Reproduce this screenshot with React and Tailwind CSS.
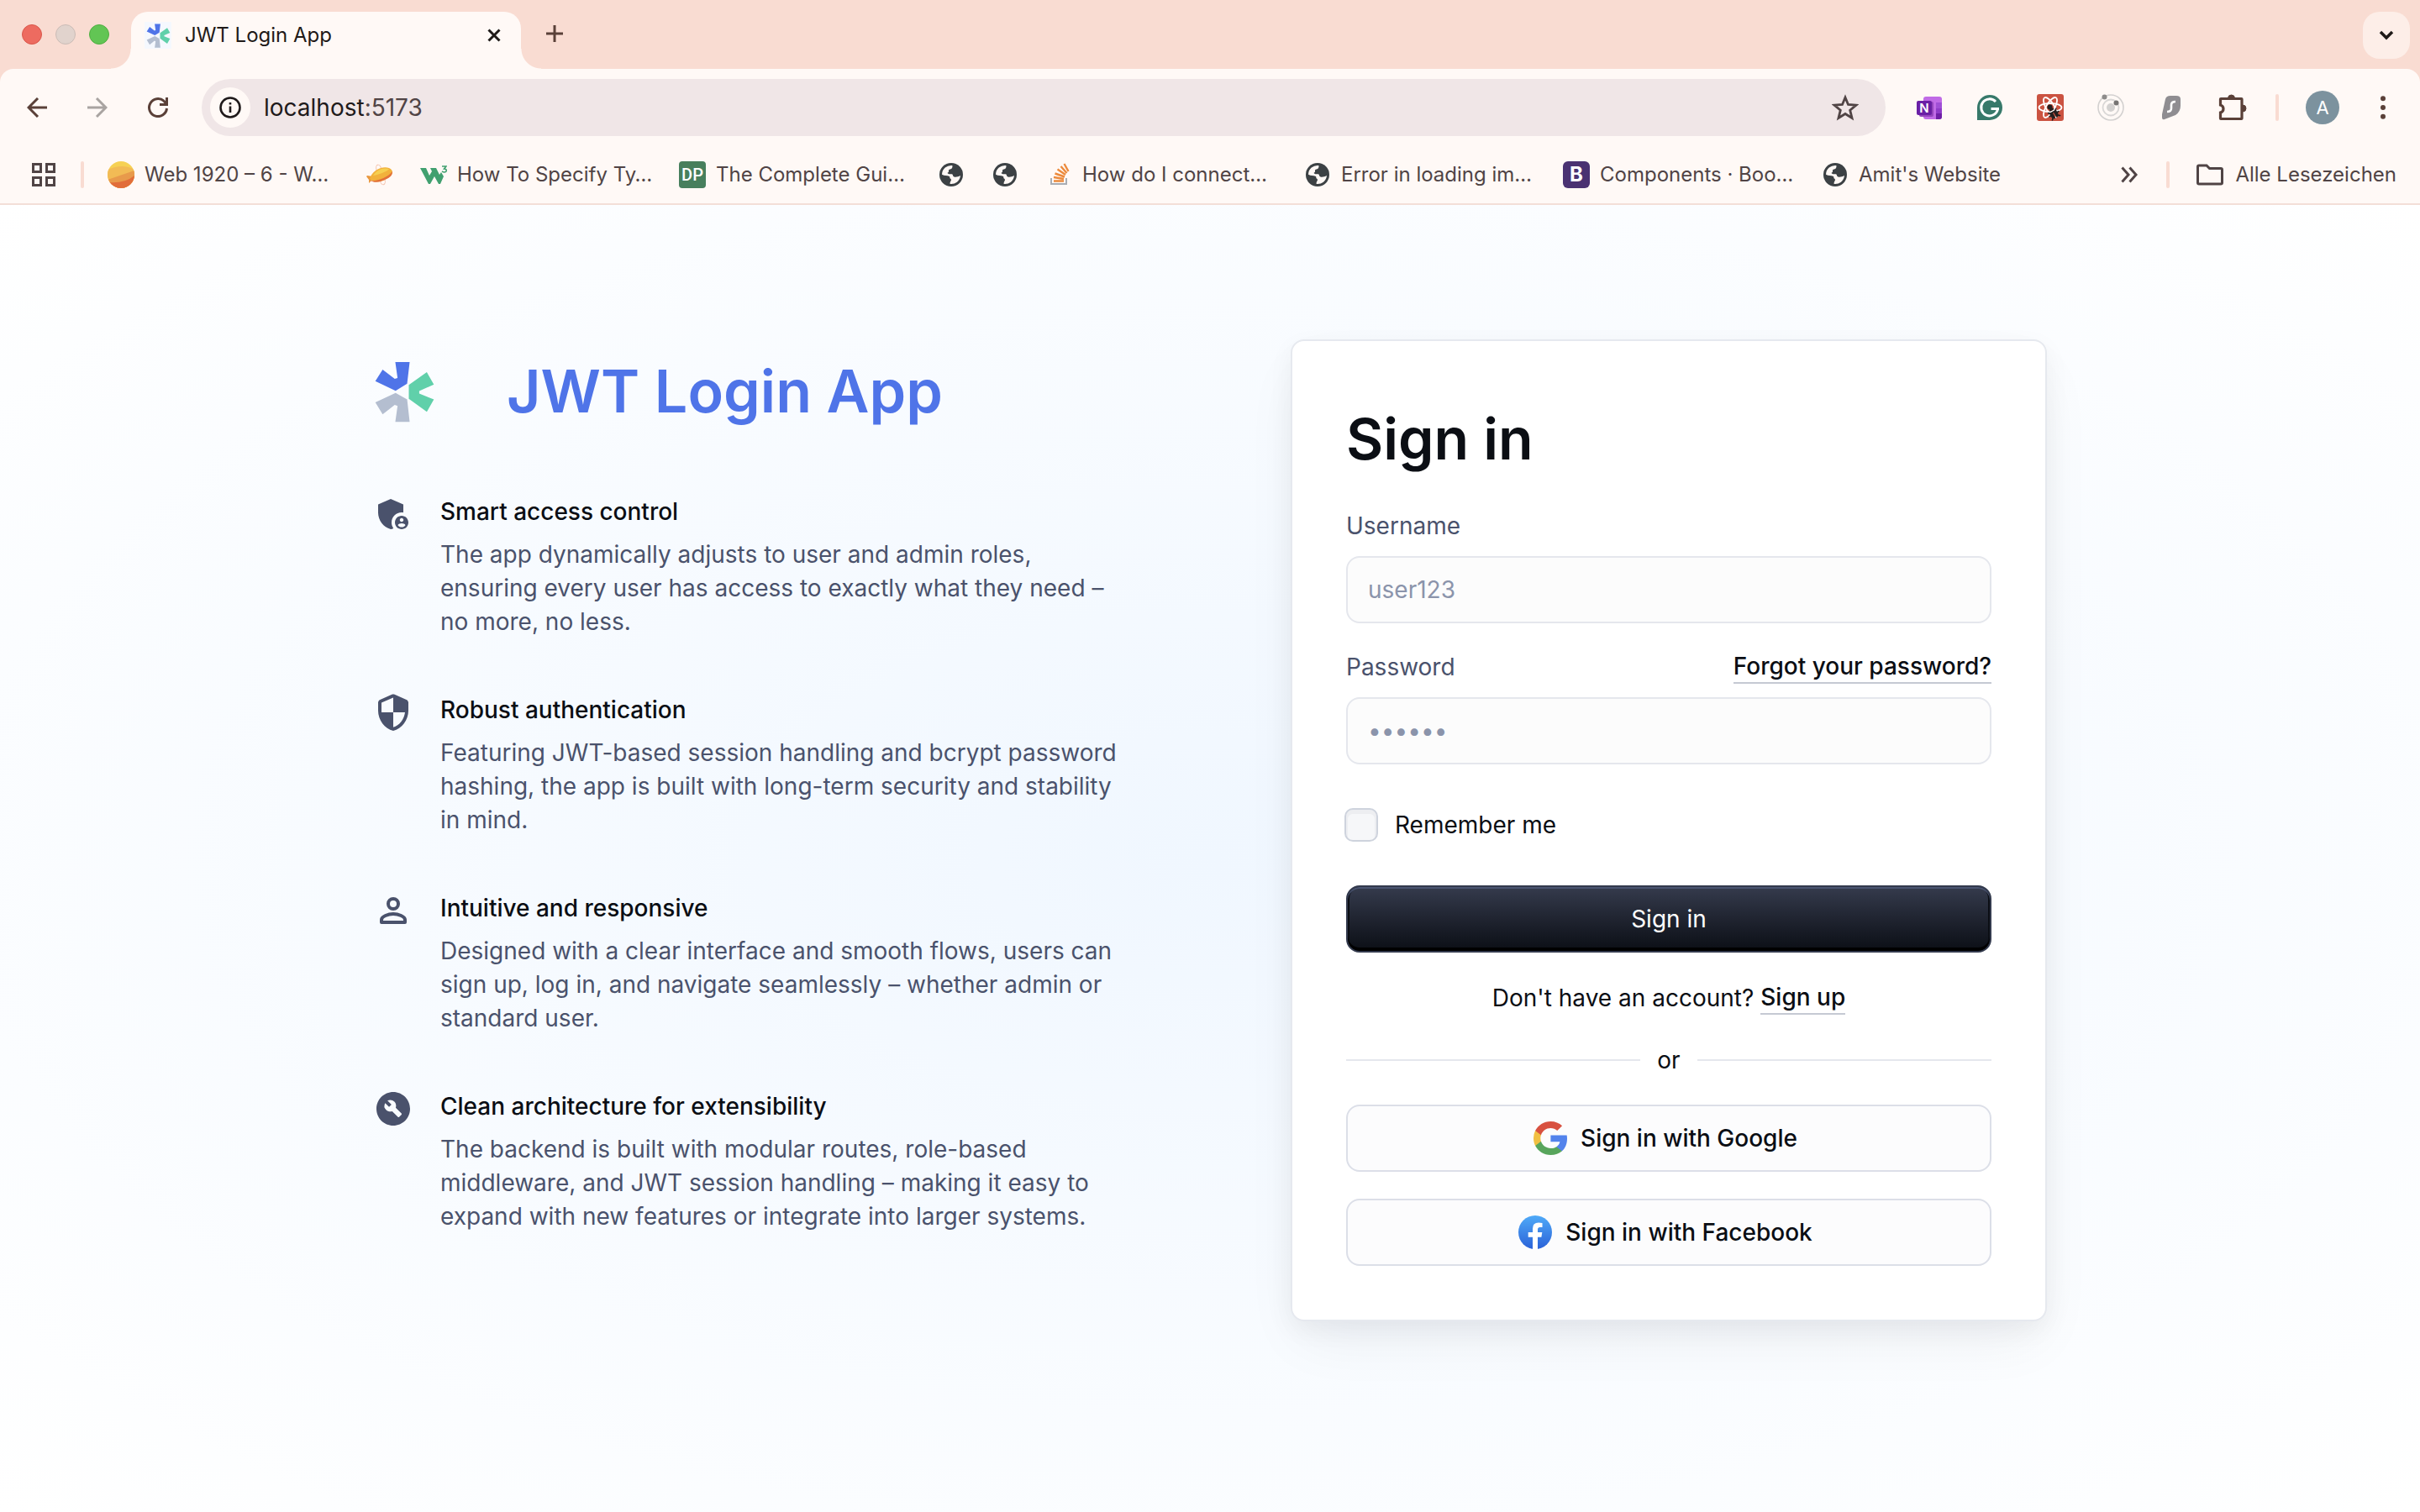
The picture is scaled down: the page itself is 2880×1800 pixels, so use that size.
import React from "react";
import { MdAdminPanelSettings, MdBuildCircle } from "react-icons/md";
import { FaBug } from "react-icons/fa";

function Logo({ className }) {
  return (
    <svg viewBox="50 54 212 218" className={className} aria-hidden="true">
      <path d="M123 57H174L165 134L124 159L52 125L78 84L121 117L131 114Z" fill="#4f74e8" />
      <path d="M171 138L235 93L260 137L208 160V169L260 190L235 234L171 188Z" fill="#60d0aa" />
      <path d="M124 167L165 190L174 270H123L131 213L121 209L78 243L52 200Z" fill="#b4bed0" />
    </svg>
  );
}

function Globe() {
  return (
    <svg viewBox="24 42 84 84" className="h-7 w-7" aria-hidden="true">
      <circle cx="66" cy="84" r="42" fill="#3c4144" />
      <path d="M33 83A33 33 0 0 1 70 51C72 60 66 65 60 65C54 66 60 74 55 76C50 78 56 82 60 82H68C74 82 70 91 78 92C86 93 92 90 99 87A33 33 0 0 1 62 117C60 108 70 104 64 98C58 96 64 91 58 89C52 86 42 88 33 83Z" fill="#fff8f5" />
    </svg>
  );
}

function BallIcon() {
  return (
    <svg viewBox="0 0 32 32" className="h-8 w-8" aria-hidden="true">
      <clipPath id="ball"><circle cx="16" cy="16" r="16" /></clipPath>
      <g clipPath="url(#ball)">
        <path d="M0 0H32V32H0Z" fill="#f6d154" />
        <path d="M0 10Q18 2 32 10V32H0Z" fill="#f2bb55" />
        <path d="M0 22L32 11V32H0Z" fill="#e89a4b" />
        <path d="M0 25Q20 27 32 17V32H0Z" fill="#e16d3a" />
      </g>
    </svg>
  );
}

function BlimpIcon() {
  return (
    <svg viewBox="0 0 32 32" className="h-8 w-8" aria-hidden="true">
      <ellipse cx="15" cy="10" rx="3" ry="6" fill="none" stroke="#f3bfa8" strokeWidth="1" transform="rotate(-15 15 10)" />
      <ellipse cx="19" cy="22" rx="3" ry="6" fill="none" stroke="#f3bfa8" strokeWidth="1" transform="rotate(-15 19 22)" />
      <path d="M1 17L7 18L6 23L3 26L3 22L0 18Z" fill="#e9973d" />
      <path d="M4 21C6 12 18 5 27 8C34 11 31 18 24 21C17 25 9 26 4 21Z" fill="#f2b13b" />
      <path d="M5 23C13 24 26 19 31 12C31 17 28 19 24 21C17 25 9 26 5 23Z" fill="#e2703a" />
      <path d="M8 17C12 10 20 7 27 9C25 12 15 16 8 17Z" fill="#f6cf50" />
    </svg>
  );
}

function W3Icon() {
  return (
    <svg viewBox="0 0 32 32" className="h-8 w-8" aria-hidden="true">
      <path d="M0 8H7L11 17L14 12L12 8H19L23 16L25 13L28 18L24 27H22L17 18L12 27H10Z" fill="#41a06f" />
      <path d="M26 6H31L28.500 9Q32 9 31 12Q29 14 26 12" fill="none" stroke="#41a06f" strokeWidth="1.600" />
    </svg>
  );
}

function DpIcon() {
  return (
    <span className="flex h-8 w-8 items-center justify-center rounded-[4px] bg-[#477f5d] font-['Roboto',sans-serif] text-[20px] font-medium leading-none text-white">
      DP
    </span>
  );
}

function BootstrapIcon() {
  return (
    <span className="flex h-8 w-8 items-center justify-center rounded-[6px] bg-[#4a3272] text-[24px] font-bold leading-none text-white">
      B
    </span>
  );
}

function StackIcon() {
  return (
    <svg viewBox="0 0 32 32" className="h-8 w-8" aria-hidden="true">
      <path d="M7 20V27H25V20" fill="none" stroke="#a9adb3" strokeWidth="2" />
      <g stroke="#ec8a3c" strokeWidth="2.400">
        <path d="M10 23.500H22M10 19L22 21M11.500 14.500L23 18.500M14.500 9.500L24 16M18.500 6L25.500 14M22.500 3L27.500 12" />
      </g>
    </svg>
  );
}

const bookmarks = [
  { icon: <BallIcon />, label: "Web 1920 – 6 - W…" },
  { icon: <BlimpIcon />, name: "Blimp" },
  { icon: <W3Icon />, label: "How To Specify Ty…" },
  { icon: <DpIcon />, label: "The Complete Gui…" },
  { icon: <Globe />, name: "Bookmark" },
  { icon: <Globe />, name: "Bookmark" },
  { icon: <StackIcon />, label: "How do I connect…" },
  { icon: <Globe />, label: "Error in loading im…" },
  { icon: <BootstrapIcon />, label: "Components · Boo…" },
  { icon: <Globe />, label: "Amit's Website" },
];

function TabStrip() {
  return (
    <div className="flex h-[82px] items-end bg-[#f9dcd2]">
      <div className="flex h-[82px] w-[156px] shrink-0 items-center gap-4 pl-[26px]">
        <span className="h-6 w-6 rounded-full border border-[#d9574b] bg-[#ed6b60]" />
        <span className="h-6 w-6 rounded-full border border-[#cbbcb6] bg-[#e1d3cd]" />
        <span className="h-6 w-6 rounded-full border border-[#4fae41] bg-[#62c554]" />
      </div>
      <div className="relative flex h-[68px] w-[464px] shrink-0 items-center rounded-t-[20px] bg-[#fff9f6] pb-3 pl-4 pr-6">
        <span className="absolute bottom-0 right-full h-6 w-6 bg-[radial-gradient(circle_at_0_0,transparent_23px,#fff9f6_24px)]" />
        <span className="absolute bottom-0 left-full h-6 w-6 bg-[radial-gradient(circle_at_100%_0,transparent_23px,#fff9f6_24px)]" />
        <span className="flex h-8 w-8 items-center justify-center bg-[#f5f8fe]">
          <Logo className="h-[29px] w-[29px]" />
        </span>
        <span className="ml-4 flex-1 text-[24px] leading-8 text-[#1f1a18]">JWT Login App</span>
        <button aria-label="Close tab">
          <svg viewBox="0 0 16 16" className="h-4 w-4"><path d="M1.500 1.500L14.500 14.500M14.500 1.500L1.500 14.500" stroke="#1f1a18" strokeWidth="3" /></svg>
        </button>
      </div>
      <button aria-label="New tab" className="ml-[29px] flex h-[84px] items-center">
        <svg viewBox="0 0 22 22" className="h-[22px] w-[22px]"><path d="M11 1V21M1 11H21" stroke="#5a4038" strokeWidth="3" /></svg>
      </button>
      <button aria-label="Search tabs" className="mb-3 ml-auto mr-3 flex h-14 w-14 items-center justify-center rounded-[20px] bg-[#fdeee8]">
        <svg viewBox="0 0 18 12" className="h-3 w-[18px]"><path d="M2 2L9 9L16 2" fill="none" stroke="#1f1a18" strokeWidth="3.500" /></svg>
      </button>
    </div>
  );
}

function Extensions() {
  return (
    <div className="flex shrink-0 items-center gap-10">
      <svg viewBox="0 0 32 32" className="h-8 w-8" role="img" aria-label="OneNote">
        <rect x="9" y="3" width="22" height="27" rx="3" fill="#c06be6" />
        <path d="M24 10H31V17H24Z" fill="#a04fd6" /><path d="M24 17H31V23H24Z" fill="#8f3bc9" />
        <path d="M24 23H31V27Q31 30 28 30H24Z" fill="#6f1fa6" />
        <rect x="4" y="9" width="17" height="18" rx="2" fill="#9445bd" />
        <rect x="1" y="8" width="18" height="17" rx="2" fill="#6a1fa5" />
        <text x="10" y="22" textAnchor="middle" fontSize="15" fontWeight="600" fill="#fff">N</text>
      </svg>
      <svg viewBox="0 0 32 32" className="h-8 w-8" role="img" aria-label="Grammarly">
        <path d="M1 31V16A15 15 0 1 1 16 31Z" fill="#37796a" />
        <path d="M23 9A10 10 0 1 0 25.500 18M17.500 17.500H27" fill="none" stroke="#fff" strokeWidth="3" />
      </svg>
      <span className="relative flex h-8 w-8 rounded-[3px] bg-[#cb5341]">
        <svg viewBox="0 0 32 32" className="h-8 w-8" role="img" aria-label="React developer tools">
          <g fill="none" stroke="#fff" strokeWidth="1.800">
            <ellipse cx="16" cy="16" rx="13.500" ry="5" />
            <ellipse cx="16" cy="16" rx="13.500" ry="5" transform="rotate(60 16 16)" />
            <ellipse cx="16" cy="16" rx="13.500" ry="5" transform="rotate(120 16 16)" />
          </g>
          <circle cx="15.500" cy="15.500" r="3" fill="#231f1f" />
        </svg>
        <FaBug className="absolute bottom-[2px] right-[4px] h-[14px] w-[16px] -rotate-30 text-[#231f1f]" />
      </span>
      <svg viewBox="0 0 32 32" className="h-8 w-8" role="img" aria-label="Orbit">
        <circle cx="16" cy="16" r="15" fill="none" stroke="#d3d1d0" strokeWidth="1.600" />
        <circle cx="16" cy="16" r="9.500" fill="none" stroke="#d9d7d6" strokeWidth="1.800" />
        <circle cx="16" cy="16" r="5" fill="#d3d1d0" />
        <circle cx="8.500" cy="3.500" r="3" fill="#8e8c8b" /><circle cx="22.500" cy="10.500" r="3" fill="#767473" />
      </svg>
      <svg viewBox="0 0 32 32" className="h-8 w-8" role="img" aria-label="Surfshark">
        <path d="M9 6Q10 2 15 2H22Q27 2 27 6V14Q27 21 21 25L8 30Q5 31 5 28V24Z" fill="#8f8d91" />
        <path d="M21 9Q16 9 16 13V17Q16 21 11 21" fill="none" stroke="#fff" strokeWidth="2.600" />
      </svg>
      <button aria-label="Extensions">
        <svg viewBox="0 0 32 32" className="h-8 w-8 overflow-visible">
          <path d="M3 5.500H27.500Q28 5.500 28 6V29Q28 29.500 27.500 29.500H3Q2.500 29.500 2.500 29V22Q6 21 6 17.500T2.500 13V6Q2.500 5.500 3 5.500Z" fill="none" stroke="#5a4038" strokeWidth="3.200" />
          <path d="M11.500 5A4 4 0 0 1 19.500 5ZM29 13A4 4 0 0 1 29 21Z" fill="#5a4038" stroke="#5a4038" />
        </svg>
      </button>
    </div>
  );
}

function Toolbar() {
  return (
    <div className="bg-[#f9dcd2]">
      <div className="flex h-[92px] items-center rounded-t-2xl bg-[#fff9f6] pl-8 pr-10">
        <button aria-label="Back" className="shrink-0">
          <svg viewBox="0 0 24 24" className="h-6 w-6"><path d="M24 12H2M13 1L2 12L13 23" fill="none" stroke="#5a4038" strokeWidth="3" /></svg>
        </button>
        <button aria-label="Forward" className="ml-12 shrink-0">
          <svg viewBox="0 0 24 24" className="h-6 w-6"><path d="M0 12H22M11 1L22 12L11 23" fill="none" stroke="#a9a4a1" strokeWidth="3" /></svg>
        </button>
        <button aria-label="Reload" className="ml-12 shrink-0">
          <svg viewBox="0 0 24 24" className="h-6 w-6">
            <path d="M22.500 13A10.500 10.500 0 1 1 19 4.200L22 7.500M14 8.500H22.500V0" fill="none" stroke="#5a4038" strokeWidth="3" />
          </svg>
        </button>
        <div className="ml-10 flex h-[68px] min-w-0 flex-1 items-center rounded-full bg-[#f0e6e7] pl-[10px] pr-8">
          <button aria-label="Site information" className="flex h-12 w-12 shrink-0 items-center justify-center rounded-full bg-[#fff9f6]">
            <svg viewBox="0 0 26 26" className="h-[26px] w-[26px]">
              <circle cx="13" cy="13" r="11.500" fill="none" stroke="#1f1a1b" strokeWidth="2.600" />
              <path d="M13 11.500V19M13 7V9.500" stroke="#1f1a1b" strokeWidth="2.600" />
            </svg>
          </button>
          <span className="ml-4 flex-1 text-[28px] text-[#1f1a1b]">localhost<span className="text-[#504445]">:5173</span></span>
          <button aria-label="Bookmark this page">
            <svg viewBox="0 0 32 32" className="h-8 w-8"><path d="M16 4L19.500 12.500L29 13.200L21.700 19.200L24 28.500L16 23.500L8 28.500L10.300 19.200L3 13.200L12.500 12.500Z" fill="none" stroke="#504445" strokeWidth="2.800" /></svg>
          </button>
        </div>
        <div className="ml-9 flex shrink-0 items-center">
          <Extensions />
          <span className="ml-9 h-8 w-1 rounded-full bg-[#f9dcd2]" />
          <button aria-label="Profile" className="ml-8 flex h-10 w-10 items-center justify-center rounded-full bg-[#7c929e] text-[22px] text-white">A</button>
          <button aria-label="Menu" className="ml-12">
            <svg viewBox="0 0 8 28" className="h-7 w-2"><g fill="#5a4038"><circle cx="4" cy="3.200" r="3" /><circle cx="4" cy="14" r="3" /><circle cx="4" cy="24.800" r="3" /></g></svg>
          </button>
        </div>
      </div>
    </div>
  );
}

function BookmarksBar() {
  return (
    <nav aria-label="Bookmarks" className="flex h-[70px] items-center border-b-2 border-[#f3ded7] bg-[#fff9f6] pl-[38px] pr-7 text-[24px] text-[#504445]">
      <button aria-label="Tab groups" className="shrink-0">
        <svg viewBox="0 0 28 28" className="h-7 w-7" fill="none" stroke="#504445" strokeWidth="3">
          <rect x="1.500" y="1.500" width="9" height="9" /><rect x="17.500" y="1.500" width="9" height="9" />
          <rect x="1.500" y="17.500" width="9" height="9" /><rect x="17.500" y="17.500" width="9" height="9" />
        </svg>
      </button>
      <span className="ml-[30px] h-8 w-1 shrink-0 rounded-full bg-[#f9dcd2]" />
      <div className="ml-7 flex min-w-0 flex-1 gap-8 overflow-hidden">
        {bookmarks.map((b, i) =>
          b.label ? (
            <a key={i} href="#" className="flex w-[276px] shrink-0 items-center gap-3">
              <span className="flex h-8 w-8 shrink-0 items-center justify-center">{b.icon}</span>
              <span className="whitespace-nowrap">{b.label}</span>
            </a>
          ) : (
            <a key={i} href="#" aria-label={b.name} className="flex h-9 w-8 shrink-0 items-center justify-center">{b.icon}</a>
          )
        )}
      </div>
      <button aria-label="More bookmarks" className="shrink-0">
        <svg viewBox="0 0 20 20" className="h-5 w-5"><path d="M1.500 1.500L9 10L1.500 18.500M10.500 1.500L18 10L10.500 18.500" fill="none" stroke="#504445" strokeWidth="3" /></svg>
      </button>
      <span className="ml-[34px] h-8 w-1 shrink-0 rounded-full bg-[#f9dcd2]" />
      <button className="ml-8 flex shrink-0 items-center gap-[14px]">
        <svg viewBox="0 0 32 26" className="h-[26px] w-8"><path d="M3 2H12L15.500 5.500H29Q30.500 5.500 30.500 7V22.500Q30.500 24 29 24H3Q1.500 24 1.500 22.500V3.500Q1.500 2 3 2Z" fill="none" stroke="#504445" strokeWidth="3" /></svg>
        Alle Lesezeichen
      </button>
    </nav>
  );
}

const features = [
  {
    icon: <MdAdminPanelSettings className="h-12 w-12" />,
    title: "Smart access control",
    text: "The app dynamically adjusts to user and admin roles, ensuring every user has access to exactly what they need – no more, no less.",
  },
  {
    icon: (
      <svg viewBox="0 0 24 24" fill="currentColor" className="h-12 w-12" aria-hidden="true">
        <path d="M11.190 1.360l-7 3.110C3.470 4.790 3 5.510 3 6.300V11c0 5.550 3.840 10.740 9 12 5.160-1.260 9-6.450 9-12V6.300c0-.79-.47-1.510-1.190-1.830l-7-3.110c-.51-.23-1.110-.23-1.620 0zM12 11.990h7c-.53 4.120-3.280 7.790-7 8.940V12H5V6.300l7-3.110v8.800z" />
      </svg>
    ),
    title: "Robust authentication",
    text: "Featuring JWT-based session handling and bcrypt password hashing, the app is built with long-term security and stability in mind.",
  },
  {
    icon: (
      <svg viewBox="0 0 24 24" fill="none" stroke="currentColor" strokeWidth="2" strokeLinejoin="round" className="h-12 w-12" aria-hidden="true">
        <circle cx="12" cy="8" r="3" />
        <path d="M5 17.500C5 15.500 9 14 12 14S19 15.500 19 17.500V19H5Z" />
      </svg>
    ),
    title: "Intuitive and responsive",
    text: "Designed with a clear interface and smooth flows, users can sign up, log in, and navigate seamlessly – whether admin or standard user.",
  },
  {
    icon: <MdBuildCircle className="h-12 w-12" />,
    title: "Clean architecture for extensibility",
    text: "The backend is built with modular routes, role-based middleware, and JWT session handling – making it easy to expand with new features or integrate into larger systems.",
  },
];

function Features() {
  return (
    <section className="flex w-full max-w-[900px] flex-col gap-16 pt-1">
      <div className="flex h-[116px] items-center gap-[86px]">
        <Logo className="ml-[2px] h-[73px] w-[71px]" />
        <h1 className="text-[70px] font-semibold leading-none text-[#4f74e8]">JWT Login App</h1>
      </div>
      {features.map((f) => (
        <div key={f.title} className="flex gap-8 text-[#4a526c]">
          <span className="shrink-0">{f.icon}</span>
          <div>
            <h2 className="mb-[10px] text-[28px] font-medium leading-[42px] text-[#0b0e14]">{f.title}</h2>
            <p className="text-[28px] leading-10">{f.text}</p>
          </div>
        </div>
      ))}
    </section>
  );
}

function GoogleIcon() {
  return (
    <svg viewBox="0 0 48 48" className="h-10 w-10" aria-hidden="true">
      <path fill="#5383ec" d="M48 24.550c0-1.650-.15-3.230-.42-4.750H24.480v9.280h13.210c-.57 3-2.300 5.540-4.900 7.240v6.020h7.930C45.370 38.100 48 31.890 48 24.550z" />
      <path fill="#58a55c" d="M24.480 48c6.630 0 12.190-2.150 16.250-5.830l-7.930-6.020c-2.200 1.440-5 2.300-8.320 2.300-6.400 0-11.820-4.210-13.750-9.870H2.530v6.220C6.570 42.650 14.870 48 24.480 48z" />
      <path fill="#f1bf42" d="M10.730 28.580c-.49-1.440-.77-2.980-.77-4.580s.28-3.140.77-4.580V13.200H2.530A23.500 23.500 0 0 0 0 24c0 3.870.95 7.530 2.530 10.800z" />
      <path fill="#d85140" d="M24.480 9.550c3.610 0 6.850 1.210 9.400 3.590l7.040-6.900C36.660 2.380 31.100 0 24.480 0 14.870 0 6.570 5.350 2.530 13.200l8.200 6.220c1.930-5.660 7.350-9.870 13.750-9.870z" />
    </svg>
  );
}

function FacebookIcon() {
  return (
    <svg viewBox="0 0 40 40" className="h-10 w-10" aria-hidden="true">
      <linearGradient id="fb" x1="0" y1="0" x2="0" y2="1">
        <stop stopColor="#4faaf8" /><stop offset="1" stopColor="#2b62d8" />
      </linearGradient>
      <circle cx="20" cy="20" r="20" fill="url(#fb)" />
      <path d="M17 40V25.800H11.700V20H17V15.500Q17 8.500 24 8.500Q26.500 8.500 28.500 9V13.900H25.600Q23 13.900 23 16.700V20H28.300L27.400 25.800H23V40Q20 40.500 17 40Z" fill="#fff" />
    </svg>
  );
}

const fieldClass =
  "h-20 w-full rounded-2xl border-2 border-[#e5e7ed] bg-[#fcfcfc] px-6 text-[28px] text-[#0b0e14] placeholder:text-[#8b94ab] placeholder:opacity-100 focus:outline-none";
const socialClass =
  "flex h-20 w-full items-center justify-center gap-4 rounded-2xl border-2 border-[#dcdfe8] bg-[#fcfcfd] pr-2 text-[28px] font-medium text-[#0b0e14]";
const linkClass = "border-b-2 border-[#c5c9d3] font-medium leading-[38px]";

function SignInCard() {
  return (
    <section className="flex w-full max-w-[900px] flex-col gap-8 rounded-2xl border-2 border-[#e6e9ef] bg-white p-16 text-[28px] leading-10 text-[#0b0e14] shadow-[0_10px_30px_0_rgba(9,11,17,0.05),0_30px_70px_-10px_rgba(19,23,32,0.06)]">
      <h2 className="text-[68px] font-semibold leading-[104px]">Sign in</h2>
      <form className="flex flex-col gap-8" onSubmit={(e) => e.preventDefault()}>
        <div className="flex flex-col gap-4">
          <label htmlFor="username" className="text-[#4a526c]">Username</label>
          <input id="username" type="text" placeholder="user123" className={fieldClass} />
        </div>
        <div className="flex flex-col gap-4">
          <div className="flex h-10 items-center justify-between">
            <label htmlFor="password" className="text-[#4a526c]">Password</label>
            <a href="#" className={linkClass}>Forgot your password?</a>
          </div>
          <input id="password" type="password" placeholder="••••••" className={fieldClass} />
        </div>
        <div className="my-5 -ml-[2px] flex items-center gap-5">
          <input
            id="remember"
            type="checkbox"
            className="h-10 w-10 appearance-none rounded-[10px] border-2 border-[#ced3dd] bg-[#f6f7f9] shadow-[inset_0_3px_0_2px_rgba(20,30,50,0.04)]"
          />
          <label htmlFor="remember">Remember me</label>
        </div>
        <button
          type="submit"
          className="h-20 rounded-2xl border-2 border-[#333a4d] bg-linear-to-b from-[#353b4d] to-[#0c0f16] text-white shadow-[inset_0_2px_0_#4a5470,inset_0_-4px_0_#000,inset_2px_0_0_#0b0e14,inset_-2px_0_0_#0b0e14]"
        >
          Sign in
        </button>
        <p className="flex h-[42px] items-end justify-center gap-2">
          Don't have an account? <a href="#" className={linkClass}>Sign up</a>
        </p>
      </form>
      <div className="flex h-[43px] items-center gap-5">
        <span className="h-[2px] flex-1 bg-[#e5e7ed]" />
        or
        <span className="h-[2px] flex-1 bg-[#e5e7ed]" />
      </div>
      <button className={socialClass}><GoogleIcon />Sign in with Google</button>
      <button className={socialClass}><FacebookIcon />Sign in with Facebook</button>
    </section>
  );
}

export default function App() {
  return (
    <div className="flex min-h-screen flex-col font-['Inter','Liberation_Sans',sans-serif]">
      <header>
        <TabStrip />
        <Toolbar />
        <BookmarksBar />
      </header>
      <main className="flex flex-1 items-start justify-center gap-48 bg-[radial-gradient(ellipse_at_50%_50%,#f0f7ff,#ffffff)] px-8 pb-16 pt-40">
        <Features />
        <SignInCard />
      </main>
    </div>
  );
}
